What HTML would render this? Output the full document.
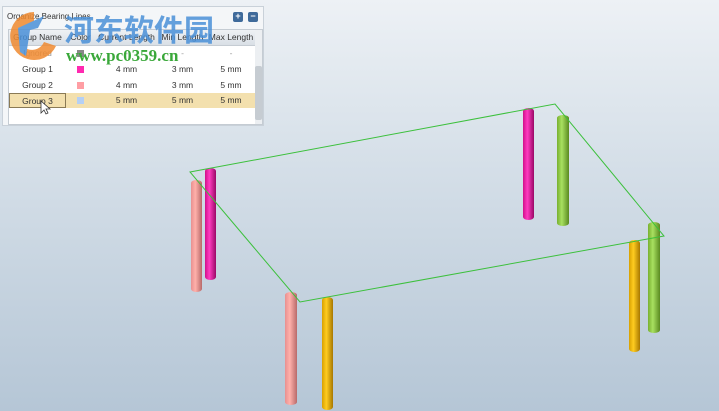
<!DOCTYPE html>
<html><head><style>
body{margin:0;width:719px;height:411px;overflow:hidden;background:linear-gradient(#edf1f5,#d5dfe8 40%,#b5c6d6);font-family:"Liberation Sans",sans-serif;position:relative}
.p{position:absolute;left:2px;top:6px;width:262px;height:120px;background:#f4f6f8;border:1px solid #c9d1d9;box-sizing:border-box}
.t{position:absolute;left:4px;top:5px;font-size:8px;color:#333}
.btn{position:absolute;top:5px;width:10px;height:10px;background:#3f6a9a;border-radius:2px;color:#fff;font-size:9px;line-height:9px;text-align:center;font-weight:bold}
.g{position:absolute;left:5px;top:22px;width:255px;height:96px;background:#fff;border:1px solid #c5ccd3;box-sizing:border-box;font-size:8.5px;color:#333}
.r{position:absolute;left:0;height:15px;width:246px}
.r div{position:absolute;top:0;height:15px;line-height:15px;text-align:center}
.sw{position:absolute;width:7px;height:7px}
.w{position:absolute;font-family:"Liberation Serif",serif;font-weight:bold;color:#3aa83a;font-size:17px;left:66px;top:46px}
.cn{position:absolute;left:64px;top:6px;font-size:30px;font-weight:bold;color:#4a90d8;font-family:"Noto Sans CJK SC",sans-serif;opacity:.85;letter-spacing:0px}
</style></head><body>
<div class="p">
<div class="t">Organize Bearing Lines</div>
<div class="btn" style="left:230px">+</div><div class="btn" style="left:245px">−</div>
<div class="g">
<div class="r" style="top:0;background:linear-gradient(#eef1f4,#d9dfe6);border-bottom:1px solid #c5ccd3;color:#333">
<div style="left:0;width:57px">Group Name</div><div style="left:57px;width:29px">Color</div><div style="left:86px;width:63px">Current Length</div><div style="left:149px;width:49px">Min Length</div><div style="left:198px;width:48px">Max Length</div></div>
<div class="r" style="top:16px;color:#999"><div style="left:0;width:57px">Ignored</div><div style="left:86px;width:63px">-</div><div style="left:149px;width:49px">-</div><div style="left:198px;width:48px">-</div></div>
<div class="r" style="top:32px"><div style="left:0;width:57px">Group 1</div><div style="left:86px;width:63px">4 mm</div><div style="left:149px;width:49px">3 mm</div><div style="left:198px;width:48px">5 mm</div></div>
<div class="r" style="top:48px"><div style="left:0;width:57px">Group 2</div><div style="left:86px;width:63px">4 mm</div><div style="left:149px;width:49px">3 mm</div><div style="left:198px;width:48px">5 mm</div></div>
<div class="r" style="top:63px;background:#f3e0ae"><div style="left:0;width:57px;border:1px solid #8a7a55;box-sizing:border-box">Group 3</div><div style="left:86px;width:63px">5 mm</div><div style="left:149px;width:49px">5 mm</div><div style="left:198px;width:48px">5 mm</div></div>
<div class="sw" style="left:68px;top:20px;background:#888"></div>
<div class="sw" style="left:68px;top:36px;background:#ff2ab0"></div>
<div class="sw" style="left:68px;top:52px;background:#ff9ea4"></div>
<div class="sw" style="left:68px;top:67px;background:#b5d0f5"></div>
<div style="position:absolute;left:246px;top:0;width:7px;height:94px;background:#eceff2"><div style="position:absolute;left:0;top:36px;width:7px;height:54px;background:#c6ccd2;border-radius:2px"></div></div>
</div></div>
<svg width="70" height="70" style="position:absolute;left:4px;top:6px;opacity:.85">
<path d="M30 6 A24 24 0 1 0 52 40 L40 36 A13 13 0 1 1 30 18Z" fill="#f08a30"/>
<path d="M14 22 L40 10 L34 22 L26 24 L22 50 L16 46 Z" fill="#4a90d8"/>
</svg>
<div class="cn">河东软件园</div>
<div class="w">www.pc0359.cn</div>
<svg width="719" height="411" style="position:absolute;left:0;top:0">
<defs>
<linearGradient id="pk" x1="0" x2="1"><stop offset="0" stop-color="#e89090"/><stop offset=".4" stop-color="#ffb0aa"/><stop offset="1" stop-color="#b86a6a"/></linearGradient>
<linearGradient id="mg" x1="0" x2="1"><stop offset="0" stop-color="#d0108a"/><stop offset=".4" stop-color="#ff3cc0"/><stop offset="1" stop-color="#9a0866"/></linearGradient>
<linearGradient id="gr" x1="0" x2="1"><stop offset="0" stop-color="#78b030"/><stop offset=".4" stop-color="#a8e060"/><stop offset="1" stop-color="#5a8a20"/></linearGradient>
<linearGradient id="yl" x1="0" x2="1"><stop offset="0" stop-color="#d8a000"/><stop offset=".4" stop-color="#ffcc20"/><stop offset="1" stop-color="#a87800"/></linearGradient>
</defs>
<g>
<rect x="191" y="180" width="11" height="112" rx="5.5" ry="3" fill="url(#pk)"/>
<rect x="205" y="168" width="11" height="112" rx="5.5" ry="3" fill="url(#mg)"/>
<rect x="523" y="108" width="11" height="112" rx="5.5" ry="3" fill="url(#mg)"/>
<rect x="557" y="115" width="12" height="111" rx="6" ry="3" fill="url(#gr)"/>
<rect x="629" y="240" width="11" height="112" rx="5.5" ry="3" fill="url(#yl)"/>
<rect x="648" y="222" width="12" height="111" rx="6" ry="3" fill="url(#gr)"/>
<rect x="285" y="292" width="12" height="113" rx="6" ry="3" fill="url(#pk)"/>
<rect x="322" y="297" width="11" height="113" rx="5.5" ry="3" fill="url(#yl)"/>
</g>
<polygon points="190,172 555,104 664,236 300,302" fill="none" stroke="#3cc03c" stroke-width="1"/>
<path d="M41 101 v12 l3-3 2 4 2-1 -2-4 4 0z" fill="#fff" stroke="#333" stroke-width=".8"/>
</svg>
</body></html>
